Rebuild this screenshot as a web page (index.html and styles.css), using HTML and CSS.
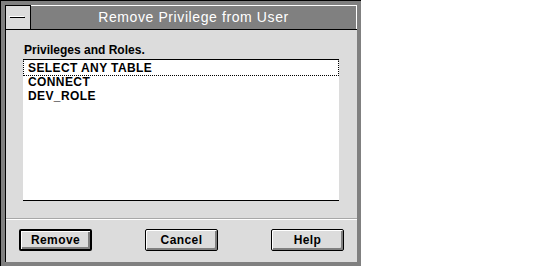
FILE: index.html
```html
<!DOCTYPE html>
<html lang="en">
<head>
    <meta charset="UTF-8">
    <title>Remove Privilege from User</title>
    <link rel="stylesheet" href="styles.css">
</head>
<body>

    <!-- Dialog window -->
    <div class="window">
        <div class="inner">
            <div class="titlebar">
                <div class="sysmenu"><span class="sysbar"></span></div>
                <div class="title">Remove Privilege from User</div>
            </div>

            <div class="client">
                <div class="label">Privileges and Roles.</div>
                <div class="listbox">
                    <div class="item focused">SELECT ANY TABLE</div>
                    <div class="item">CONNECT</div>
                    <div class="item">DEV_ROLE</div>
                </div>
            </div>

            <div class="separator"></div>

            <!-- Dialog buttons -->
            <div class="buttons">
                <button class="btn default">Remove</button>
                <button class="btn">Cancel</button>
                <button class="btn">Help</button>
            </div>
        </div>
    </div>

</body>
</html>
```

FILE: styles.css
```css
body {
    margin: 0;
    background: #fff;
    font-family: "Liberation Sans", Arial, sans-serif;
}

/* Outer frame */
.window {
    width: 361px;
    height: 266px;
    box-sizing: border-box;
    background: #808080;
    border-top: 1px solid #000;
    border-left: 1px solid #000;
    padding: 4px 4px 4px 4px;
}

.inner {
    height: 100%;
    display: flex;
    flex-direction: column;
    background: #dcdcdc;
    border-left: 1px solid #000;
}

/* Title bar */
.titlebar {
    display: flex;
    height: 24px;
    border-bottom: 1px solid #000;
}

.sysmenu {
    width: 24px;
    background: #dcdcdc;
    border-top: 1px solid #000;
    border-right: 1px solid #000;
    position: relative;
}

.sysbar {
    position: absolute;
    left: 3px;
    top: 10px;
    width: 15px;
    height: 1px;
    background: #fff;
    box-shadow: 1px 1px 0 #000;
}

.title {
    flex: 1;
    background: #808080;
    border-top: 1px solid #fff;
    border-right: 1px solid #fff;
    color: #fff;
    font-size: 14px;
    letter-spacing: 0.6px;
    text-align: center;
    line-height: 22px;
}

/* Client area */
.client {
    padding: 13px 18px 0 17px;
    font-size: 12px;
    font-weight: bold;
    letter-spacing: 0.4px;
}

.label {
    line-height: 14px;
    margin-left: 1px;
    margin-bottom: 2px;
    letter-spacing: 0;
}

.listbox {
    height: 140px;
    background: #fff;
    border-top: 1px solid #000;
    border-bottom: 1px solid #000;
}

.item {
    line-height: 14px;
    padding-left: 4px;
    border: 1px solid transparent;
    margin-bottom: -2px;
}

.item.focused {
    border: 1px dotted #000;
    border-top-color: transparent;
}

.separator {
    margin-top: 17px;
    border-top: 1px solid #a8a8a8;
    border-bottom: 1px solid #fff;
}

/* Buttons */
.buttons {
    display: flex;
    justify-content: space-between;
    padding: 9px 13px 0 13px;
}

.btn {
    width: 73px;
    height: 22px;
    box-sizing: border-box;
    background: #dcdcdc;
    border: 1px solid #000;
    border-radius: 2px;
    box-shadow: inset 1px 1px 0 #fff, inset -2px -2px 0 #808080;
    font-family: "Liberation Sans", Arial, sans-serif;
    font-size: 12px;
    font-weight: bold;
    letter-spacing: 0.4px;
    color: #000;
    padding: 0;
}

.btn.default {
    border-width: 2px;
}
```
